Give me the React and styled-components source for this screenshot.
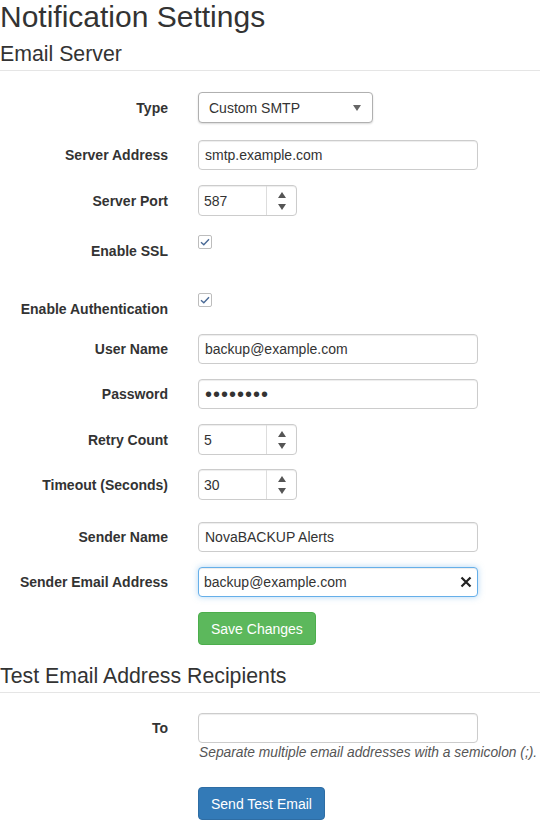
import styled, { createGlobalStyle } from 'styled-components';

const GlobalStyle = createGlobalStyle`
  html, body {
    margin: 0;
    padding: 0;
    background: #fff;
  }
  body {
    font-family: "Liberation Sans", Arial, sans-serif;
    font-size: 14px;
    color: #333;
    overflow: hidden;
  }
`;

const Page = styled.div`
  width: 540px;
  overflow: hidden;
`;

const Title = styled.h1`
  margin: 0;
  font-size: 30px;
  line-height: 34px;
  font-weight: normal;
  color: #333;
  white-space: nowrap;
`;

const SectionTitle = styled.h3`
  margin: ${(p) => p.$top || 0}px 0 0;
  padding-bottom: 5px;
  font-size: 21.3px;
  line-height: 22px;
  font-weight: normal;
  color: #333;
  border-bottom: 1px solid #e5e5e5;
`;

const Form = styled.div`
  padding-top: ${(p) => p.$top || 21}px;
`;

const Row = styled.div`
  display: flex;
  align-items: ${(p) => (p.$top ? 'flex-start' : 'center')};
  gap: 30px;
  margin-bottom: ${(p) => (p.$mb !== undefined ? p.$mb : 15)}px;
  height: ${(p) => (p.$h ? `${p.$h}px` : 'auto')};
`;

const Label = styled.label`
  width: 168px;
  flex: none;
  text-align: right;
  font-weight: bold;
  font-size: 14px;
  line-height: 20px;
  color: #333;
  padding-top: ${(p) => p.$pt || 0}px;
`;

const Field = styled.div`
  display: flex;
  flex-direction: column;
`;

const TextInput = styled.input`
  box-sizing: border-box;
  width: 280px;
  height: 30px;
  padding: 0 6px;
  font-family: inherit;
  font-size: 14px;
  color: #333;
  border: 1px solid #ccc;
  border-radius: 4px;
  box-shadow: inset 0 1px 1px rgba(0, 0, 0, 0.075);
  outline: none;
  background: #fff;

  &[type='password'] {
    font-size: 20px;
    letter-spacing: 1px;
  }
`;

const FocusBox = styled.div`
  box-sizing: border-box;
  width: 280px;
  height: 30px;
  display: flex;
  align-items: center;
  border: 1px solid #66afe9;
  border-radius: 4px;
  box-shadow: inset 0 1px 1px rgba(0, 0, 0, 0.075), 0 0 6px rgba(102, 175, 233, 0.5);
  background: #fff;
`;

const BareInput = styled.input`
  flex: 1;
  min-width: 0;
  height: 100%;
  box-sizing: border-box;
  padding: 0 5px;
  border: none;
  outline: none;
  background: transparent;
  font-family: inherit;
  font-size: 14px;
  color: #333;
`;

const ClearButton = styled.span`
  width: 22px;
  display: flex;
  align-items: center;
  justify-content: center;
  color: #222;
`;

const SelectBox = styled.div`
  box-sizing: border-box;
  width: 175px;
  height: 31px;
  display: flex;
  align-items: center;
  justify-content: space-between;
  padding: 0 10px;
  border: 1px solid #b0b0b0;
  border-radius: 4px;
  box-shadow: 0 1px 2px rgba(0, 0, 0, 0.15);
  background: #fff;
  font-size: 14px;
  color: #333;
`;

const Caret = styled.span`
  width: 0;
  height: 0;
  border-left: 4px solid transparent;
  border-right: 4px solid transparent;
  border-top: 6px solid #666;
  margin-right: 1px;
`;

const NumberBox = styled.div`
  box-sizing: border-box;
  width: 99px;
  height: 31px;
  display: flex;
  border: 1px solid #ccc;
  border-radius: 4px;
  box-shadow: inset 0 1px 1px rgba(0, 0, 0, 0.075);
  background: #fff;
  overflow: hidden;
`;

const Spinner = styled.div`
  width: 29px;
  border-left: 1px solid #ddd;
  display: flex;
  flex-direction: column;
  align-items: center;
  justify-content: center;
  gap: 6px;
`;

const Arrow = styled.span`
  width: 0;
  height: 0;
  border-left: 4px solid transparent;
  border-right: 4px solid transparent;
  ${(p) =>
    p.$up ? 'border-bottom: 6px solid #555;' : 'border-top: 6px solid #555;'}
`;

const CheckBox = styled.span`
  box-sizing: border-box;
  display: flex;
  align-items: center;
  justify-content: center;
  width: 14px;
  height: 14px;
  margin-top: ${(p) => p.$mt || 0}px;
  border: 1px solid #bdbdbd;
  border-radius: 2px;
  background: #fff;
`;

const Help = styled.p`
  margin: 2px 0 0 1px;
  font-size: 13.8px;
  line-height: 16px;
  font-style: italic;
  color: #555;
  white-space: nowrap;
`;

const Button = styled.button`
  box-sizing: border-box;
  height: 33px;
  padding: 0 12px;
  border: 1px solid ${(p) => (p.$variant === 'success' ? '#4cae4c' : '#2e6da4')};
  border-radius: 4px;
  background: ${(p) => (p.$variant === 'success' ? '#5cb85c' : '#337ab7')};
  color: #fff;
  font-family: inherit;
  font-size: 14px;
  cursor: pointer;
`;

function NumberField({ value }) {
  return (
    <NumberBox>
      <BareInput value={value} readOnly />
      <Spinner>
        <Arrow $up />
        <Arrow />
      </Spinner>
    </NumberBox>
  );
}

function Check({ mt }) {
  return (
    <CheckBox $mt={mt}>
      <svg width="10" height="8" viewBox="0 0 10 8">
        <path d="M1 4.2 L3.8 6.8 L9 1.2" fill="none" stroke="#4a6a96" strokeWidth="1.4" />
      </svg>
    </CheckBox>
  );
}

function App() {
  return (
    <>
      <GlobalStyle />
      <Page>
        <Title>Notification Settings</Title>
        <SectionTitle $top={9}>Email Server</SectionTitle>

        <Form>
          <Row $mb={17}>
            <Label>Type</Label>
            <SelectBox>
              <span>Custom SMTP</span>
              <Caret />
            </SelectBox>
          </Row>
          <Row>
            <Label>Server Address</Label>
            <TextInput value="smtp.example.com" readOnly />
          </Row>
          <Row>
            <Label>Server Port</Label>
            <NumberField value="587" />
          </Row>
          <Row $top $h={44}>
            <Label $pt={10}>Enable SSL</Label>
            <Check mt={4} />
          </Row>
          <Row $top $h={29}>
            <Label $pt={9}>Enable Authentication</Label>
            <Check mt={3} />
          </Row>
          <Row>
            <Label>User Name</Label>
            <TextInput value="backup@example.com" readOnly />
          </Row>
          <Row>
            <Label>Password</Label>
            <TextInput type="password" value="password" readOnly />
          </Row>
          <Row $mb={14}>
            <Label>Retry Count</Label>
            <NumberField value="5" />
          </Row>
          <Row $mb={22}>
            <Label>Timeout (Seconds)</Label>
            <NumberField value="30" />
          </Row>
          <Row>
            <Label>Sender Name</Label>
            <TextInput value="NovaBACKUP Alerts" readOnly />
          </Row>
          <Row>
            <Label>Sender Email Address</Label>
            <FocusBox>
              <BareInput value="backup@example.com" readOnly />
              <ClearButton>
                <svg width="12" height="12" viewBox="0 0 12 12">
                  <path d="M1.5 1.5 L10.5 10.5 M10.5 1.5 L1.5 10.5" stroke="#222" strokeWidth="2.2" />
                </svg>
              </ClearButton>
            </FocusBox>
          </Row>
          <Row $mb={0}>
            <Label />
            <Button $variant="success">Save Changes</Button>
          </Row>
        </Form>

        <SectionTitle $top={20}>Test Email Address Recipients</SectionTitle>

        <Form $top={20}>
          <Row $top $mb={26}>
            <Label $pt={5}>To</Label>
            <Field>
              <TextInput value="" readOnly />
              <Help>Separate multiple email addresses with a semicolon (;).</Help>
            </Field>
          </Row>
          <Row $mb={0}>
            <Label />
            <Button $variant="primary">Send Test Email</Button>
          </Row>
        </Form>
      </Page>
    </>
  );
}

export default App;
